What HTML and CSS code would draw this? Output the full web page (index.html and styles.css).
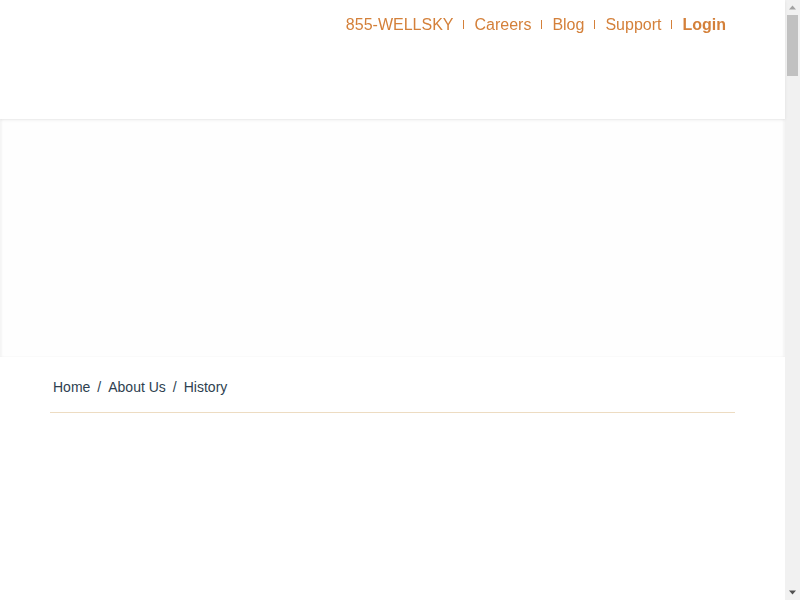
FILE: index.html
```html
<!DOCTYPE html>
<html lang="en">
<head>
    <meta charset="UTF-8">
    <meta name="viewport" content="width=device-width, initial-scale=1.0">
    <title>History | WellSky</title>
    <link rel="stylesheet" href="styles.css">
</head>
<body>
<div class="page">
    <header class="site-header">
        <div class="container">
            <ul class="utility-nav">
                <li><a href="#">855-WELLSKY</a></li>
                <li><a href="#">Careers</a></li>
                <li><a href="#">Blog</a></li>
                <li><a href="#">Support</a></li>
                <li><a href="#" class="login">Login</a></li>
            </ul>
        </div>
    </header>
    <section class="hero"></section>
    <main class="container">
        <nav class="breadcrumb"><a href="#">Home</a><span class="sep">/</span><a href="#">About Us</a><span class="sep">/</span><span class="current">History</span></nav>
        <div class="page-body"></div>
    </main>
</div>

<!-- window scrollbar -->
<div class="scrollbar">
    <svg class="arrow up" width="15" height="15" viewBox="0 0 15 15"><path d="M4 9.5h7L7.5 5.5z" fill="#a3a3a3"/></svg>
    <div class="thumb"></div>
    <svg class="arrow down" width="15" height="15" viewBox="0 0 15 15"><path d="M4 5.5h7L7.5 9.5z" fill="#505050"/></svg>
</div>
</body>
</html>
```

FILE: styles.css
```css
body { margin: 0; font-family: "Liberation Sans", Arial, sans-serif; background: #fff; color: #2e3f50; }
a { text-decoration: none; }
.page { width: 785px; }
.container { width: 685px; margin: 0 auto; }

.site-header { height: 119px; background: #fff; box-shadow: 0 1px 3px rgba(0,0,0,0.08); position: relative; z-index: 1; }
.utility-nav { list-style: none; margin: 0; padding: 15px 9px 0 0; display: flex; justify-content: flex-end; align-items: center; }
.utility-nav li { display: flex; align-items: center; font-size: 16px; line-height: 19px; }
.utility-nav li + li::before { content: ""; display: block; width: 1px; height: 9px; background: #d4803a; margin: 0 10px; }
.utility-nav a { color: #d4803a; }
.utility-nav .login { font-weight: bold; }

.hero { height: 238px; background: #fefefe; box-shadow: inset 2px 0 2px rgba(0,0,0,0.04), inset -2px 0 2px rgba(0,0,0,0.04); }

.breadcrumb { padding: 21px 3px 16px; font-size: 14px; line-height: 18px; border-bottom: 1px solid #eddcc2; }
.breadcrumb a, .breadcrumb .current { color: #2e3f50; }
.breadcrumb .sep { margin: 0 7px; }
.page-body { height: 600px; }

.scrollbar { position: fixed; top: 0; right: 0; width: 15px; height: 100vh; background: #f1f1f1; display: flex; flex-direction: column; }
.scrollbar .arrow { display: block; flex: none; }
.scrollbar .thumb { height: 61px; margin: 0 2px; background: #c1c1c1; }
.scrollbar .down { margin-top: auto; }
```
